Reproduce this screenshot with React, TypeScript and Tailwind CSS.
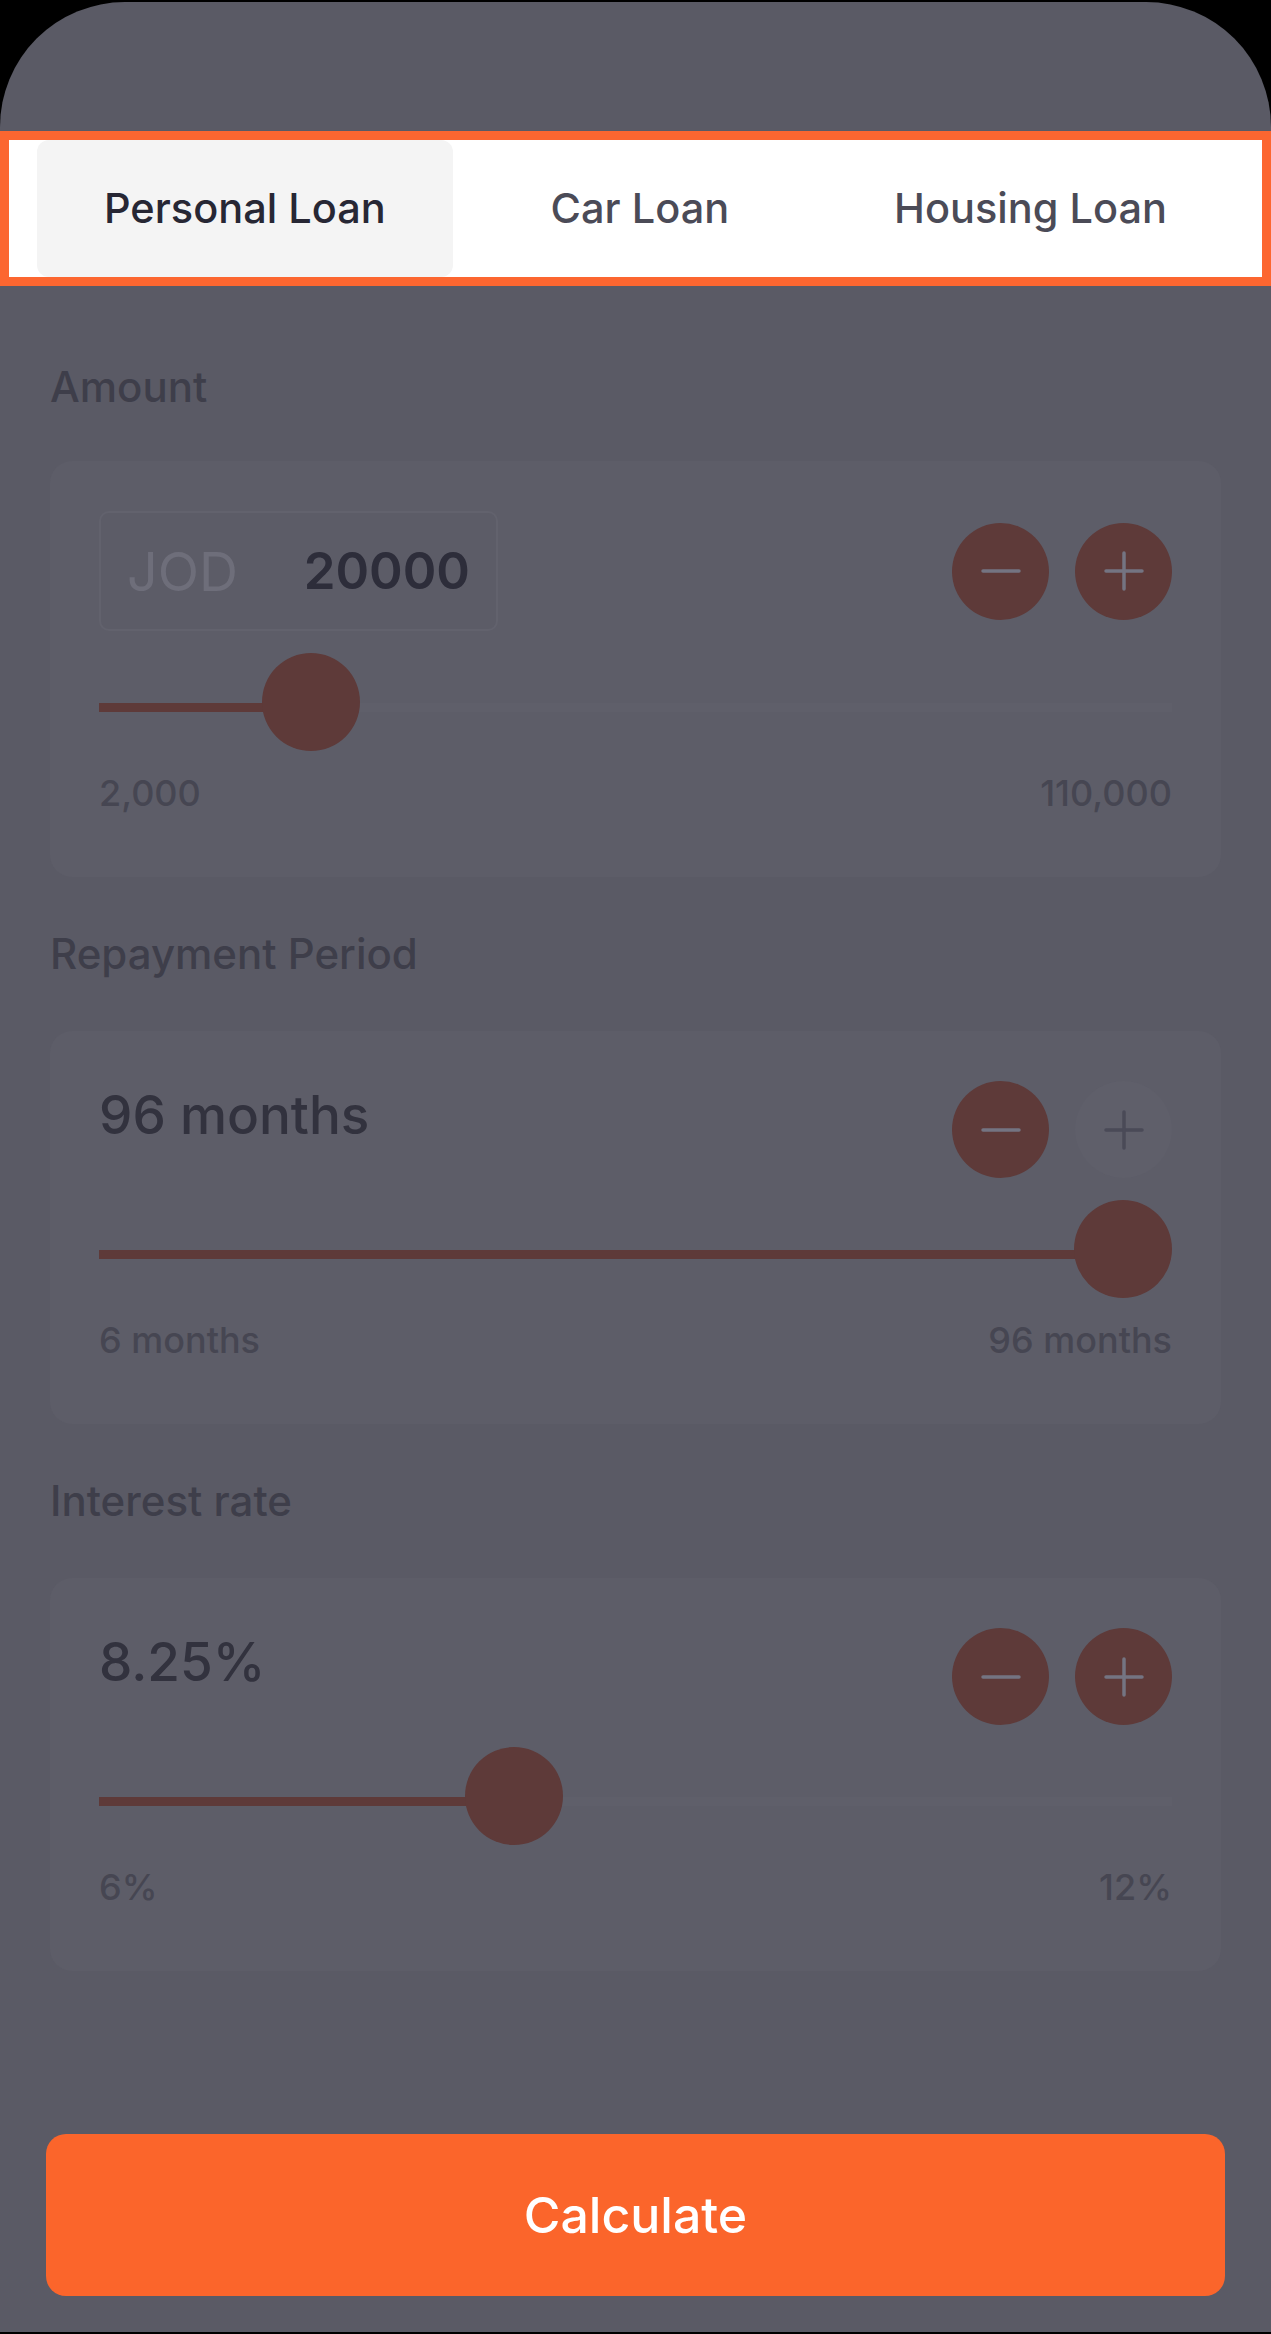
type SliderCardProps = {
    header: React.ReactNode;
    fraction: number;
    minLabel: string;
    maxLabel: string;
    plusDisabled?: boolean;
    centerHeader?: boolean;
};

// Round stepper button, dimmed by the overlay
function StepButton({ kind, disabled }: { kind: "minus" | "plus"; disabled?: boolean }) {
    return (
        <div
            className={`flex size-[97px] items-center justify-center rounded-full ${disabled ? "bg-[#5f5f6a]" : "bg-[#5e3a39]"
                }`}
        >
            <svg
                viewBox="0 0 40 40"
                className={`size-[40px] ${disabled ? "text-[#4a4a57]" : "text-[#747482]"}`}
                fill="none"
                stroke="currentColor"
                strokeWidth={3.5}
                strokeLinecap="round"
            >
                <path d="M2 20h36" />
                {kind === "plus" && <path d="M20 2v36" />}
            </svg>
        </div>
    );
}

// Slider with thumb placed from the value fraction
function RangeSlider({ fraction }: { fraction: number }) {
    const thumbLeft = `calc(${fraction} * (100% - 98px))`;
    const fillWidth = `calc(${fraction} * (100% - 98px) + 49px)`;
    return (
        <div className="relative h-[98px]">
            <div className="absolute left-0 right-0 top-[50px] h-[9px] bg-[#5f5f6a]" />
            <div className="absolute left-0 top-[50px] h-[9px] bg-[#5e3a39]" style={{ width: fillWidth }} />
            <div className="absolute top-0 size-[98px] rounded-full bg-[#5e3a39]" style={{ left: thumbLeft }} />
        </div>
    );
}

function SliderCard({ header, fraction, minLabel, maxLabel, plusDisabled, centerHeader }: SliderCardProps) {
    return (
        <div className="rounded-[22px] bg-[#5d5d68] px-[49px] pb-[62px] pt-[50px]">
            <div className={`flex justify-between ${centerHeader ? "items-center" : "items-start"}`}>
                {header}
                <div className="flex gap-[26px]">
                    <StepButton kind="minus" />
                    <StepButton kind="plus" disabled={plusDisabled} />
                </div>
            </div>
            <div className="mt-[22px]">
                <RangeSlider fraction={fraction} />
            </div>
            <div className="mt-[20px] flex justify-between text-[36px] font-medium leading-[44px] text-[#464652]">
                <span>{minLabel}</span>
                <span>{maxLabel}</span>
            </div>
        </div>
    );
}

function SectionLabel({ children, className }: { children: React.ReactNode; className?: string }) {
    return (
        <p className={`text-[42px] font-medium leading-[50px] text-[#3e3e4a] ${className ?? ""}`}>{children}</p>
    );
}

export default function App() {
    const tabs = ["Personal Loan", "Car Loan", "Housing Loan"];
    const selectedTab = 0;

    return (
        <div className="min-h-[2334px] w-[1271px] bg-black pt-[2px] font-['Inter',sans-serif]">
            <div className="flex h-[2330px] flex-col rounded-t-[125px] bg-[#5a5a65] pt-[129px]">
                {/* Highlighted tab bar */}
                <div className="flex h-[155px] justify-between border-[9px] border-[#fc6630] bg-white px-[28px]">
                    {tabs.map((tab, i) => (
                        <div
                            key={tab}
                            className={`flex h-full items-center rounded-[12px] px-[67px] text-[41.5px] font-medium ${i === selectedTab ? "bg-[#f4f4f4] text-[#272734]" : "text-[#4b4b57]"
                                }`}
                        >
                            {tab}
                        </div>
                    ))}
                </div>

                <div className="px-[50px]">
                    <SectionLabel className="mt-[76px]">Amount</SectionLabel>
                    <div className="mt-[49px]">
                        <SliderCard
                            centerHeader
                            header={
                                <div className="flex h-[120px] w-[399px] items-center justify-between rounded-[10px] border-2 border-[#62626d] bg-[#5c5c67] px-[26px]">
                                    <span className="text-[54px] font-normal text-[#6e6e7a]">JOD</span>
                                    <span className="text-[51px] font-semibold text-[#2d2d3a]">20000</span>
                                </div>
                            }
                            fraction={(20000 - 2000) / (110000 - 2000)}
                            minLabel="2,000"
                            maxLabel="110,000"
                        />
                    </div>

                    <SectionLabel className="mt-[52px]">Repayment Period</SectionLabel>
                    <div className="mt-[52px]">
                        <SliderCard
                            header={
                                <span className="text-[53px] font-medium leading-[68px] text-[#32323e]">96 months</span>
                            }
                            fraction={1}
                            minLabel="6 months"
                            maxLabel="96 months"
                            plusDisabled
                        />
                    </div>

                    <SectionLabel className="mt-[52px]">Interest rate</SectionLabel>
                    <div className="mt-[52px]">
                        <SliderCard
                            header={<span className="text-[53px] font-medium leading-[68px] text-[#32323e]">8.25%</span>}
                            fraction={(8.25 - 6) / (12 - 6)}
                            minLabel="6%"
                            maxLabel="12%"
                        />
                    </div>
                </div>

                <div className="mt-[163px] px-[46px]">
                    <button className="flex h-[162px] w-full items-center justify-center rounded-[20px] bg-[#fb652b] text-[50px] font-medium text-white">
                        Calculate
                    </button>
                </div>
            </div>
        </div>
    );
}
